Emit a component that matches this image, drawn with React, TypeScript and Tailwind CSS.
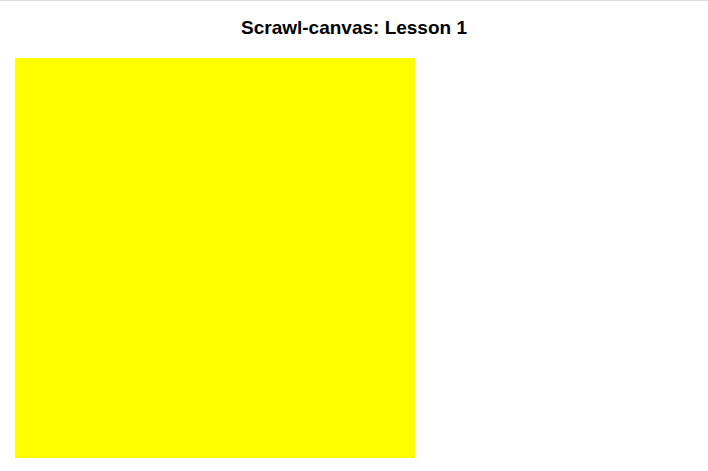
export default function App() {
  return (
    <div className="min-h-[471px] bg-white border-t border-[#dcdcdc] font-['Liberation_Sans',Arial,sans-serif]">
      <h1 className="pt-[16px] text-center text-[19px] leading-[22px] font-bold text-black">
        Scrawl-canvas: Lesson 1
      </h1>
      <div className="pt-[19px] px-[15px]">
        <div className="w-[400px] h-[400px] bg-[#ffff00]" />
      </div>
    </div>
  );
}
